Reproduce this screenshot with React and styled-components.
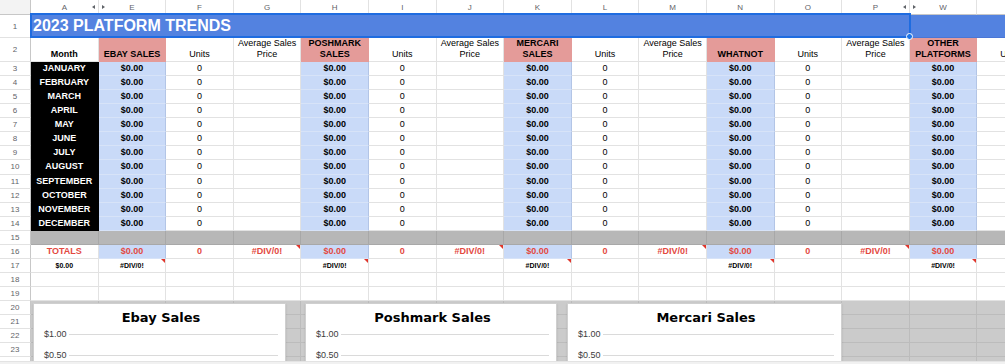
import React from "react";
import styled, { createGlobalStyle } from "styled-components";

const GlobalStyle = createGlobalStyle`
  html, body { margin: 0; padding: 0; background: #fff; }
  body {
    width: 1005px;
    height: 364px;
    overflow: hidden;
    font-family: "Liberation Sans", Arial, sans-serif;
  }
`;

const BLUE_TITLE = "#5382e0";
const LIGHT_BLUE = "#c9daf8";
const PINK = "#e49b99";
const RED = "#e3493f";
const GRID = "#e2e2e2";
const HEAD_GRID = "#c7c7c7";

const COLS = [
  { letter: "A", kind: "month", mark: "right" },
  { letter: "E", kind: "sales", head: "EBAY SALES", mark: "left" },
  { letter: "F", kind: "units" },
  { letter: "G", kind: "avg" },
  { letter: "H", kind: "sales", head: "POSHMARK\nSALES" },
  { letter: "I", kind: "units" },
  { letter: "J", kind: "avg" },
  { letter: "K", kind: "sales", head: "MERCARI\nSALES" },
  { letter: "L", kind: "units" },
  { letter: "M", kind: "avg" },
  { letter: "N", kind: "sales", head: "WHATNOT" },
  { letter: "O", kind: "units" },
  { letter: "P", kind: "avg", mark: "right" },
  { letter: "W", kind: "sales", head: "OTHER\nPLATFORMS", mark: "left" },
  { letter: "X", kind: "units" },
];

const MONTHS = [
  "JANUARY", "FEBRUARY", "MARCH", "APRIL", "MAY", "JUNE",
  "JULY", "AUGUST", "SEPTEMBER", "OCTOBER", "NOVEMBER", "DECEMBER",
];

const CHARTS = [
  { title: "Ebay Sales", left: 33, width: 253 },
  { title: "Poshmark Sales", left: 305, width: 252 },
  { title: "Mercari Sales", left: 567, width: 275 },
];

const Page = styled.div`
  width: 1005px;
  height: 364px;
  display: flex;
  flex-direction: column;
  overflow: hidden;
`;

const Viewport = styled.div`
  position: relative;
  height: 362px;
  overflow: hidden;
`;

const ScrollStrip = styled.div`
  height: 2px;
  background: #f1f1f1;
  border-top: 1px solid #e3e3e3;
`;

const Grid = styled.div`
  display: grid;
  grid-template-columns: 31px repeat(15, 67.6px);
  grid-template-rows: 15px 23px 24px repeat(22, 14.07px);
`;

const Corner = styled.div`
  box-sizing: border-box;
  background: #f3f3f3;
  border-right: 1px solid ${HEAD_GRID};
  border-bottom: 1px solid ${HEAD_GRID};
`;

const ColHead = styled.div`
  position: relative;
  box-sizing: border-box;
  display: flex;
  align-items: center;
  justify-content: center;
  background: #fff;
  color: #5f6368;
  font-size: 8px;
  border-right: 1px solid ${GRID};
  border-bottom: 1px solid ${HEAD_GRID};
`;

const HiddenMark = styled.span`
  position: absolute;
  top: 5px;
  ${(p) => (p.$side === "right" ? "right: 3px;" : "left: 3px;")}
  width: 0;
  height: 0;
  border-top: 2.5px solid transparent;
  border-bottom: 2.5px solid transparent;
  ${(p) =>
    p.$side === "right"
      ? "border-right: 3px solid #5f6368;"
      : "border-left: 3px solid #5f6368;"}
`;

const RowHead = styled.div`
  box-sizing: border-box;
  display: flex;
  align-items: center;
  justify-content: center;
  background: #fff;
  color: #5f6368;
  font-size: 8px;
  border-right: 1px solid ${HEAD_GRID};
  border-bottom: 1px solid ${GRID};
`;

const TitleCell = styled.div`
  grid-column: 2 / -1;
  box-sizing: border-box;
  display: flex;
  align-items: center;
  padding-left: 2px;
  background: ${BLUE_TITLE};
  color: #fff;
  font-size: 16px;
  font-weight: 700;
  border-bottom: 1px solid #4a76d6;
  white-space: nowrap;
`;

const Cell = styled.div`
  position: relative;
  box-sizing: border-box;
  display: flex;
  align-items: ${(p) => (p.$bottom ? "flex-end" : "center")};
  justify-content: center;
  padding-bottom: ${(p) => (p.$bottom ? "1px" : "0")};
  text-align: center;
  white-space: pre-line;
  overflow: hidden;
  background: ${(p) => p.$bg || "#fff"};
  color: ${(p) => p.$color || "#000"};
  font-size: ${(p) => p.$size || 9}px;
  font-weight: ${(p) => (p.$bold ? 700 : 400)};
  line-height: 11px;
  border-right: 1px solid ${(p) => p.$lineR || p.$line || GRID};
  border-bottom: 1px solid ${(p) => p.$line || GRID};
`;

const ErrorMark = styled.span`
  position: absolute;
  top: 0;
  right: 0;
  width: 0;
  height: 0;
  border-top: 4px solid #e0352b;
  border-left: 4px solid transparent;
`;

const Selection = styled.div`
  position: absolute;
  left: 30px;
  top: 13px;
  width: 881px;
  height: 25px;
  box-sizing: border-box;
  border: 2px solid #1f6ce0;
  pointer-events: none;
`;

const Handle = styled.div`
  position: absolute;
  left: 906px;
  top: 33px;
  width: 7px;
  height: 7px;
  box-sizing: border-box;
  border-radius: 50%;
  background: #1a73e8;
  border: 1px solid #fff;
`;

const ChartCard = styled.div`
  position: absolute;
  top: 303px;
  left: ${(p) => p.$left}px;
  width: ${(p) => p.$width}px;
  height: 120px;
  box-sizing: border-box;
  background: #fff;
  border: 1px solid #cfcfcf;
  box-shadow: 0 1px 2px rgba(0, 0, 0, 0.12);
  display: flex;
  flex-direction: column;
  padding: 6px 7px 0 10px;
`;

const ChartTitle = styled.div`
  font-family: "DejaVu Sans", Verdana, sans-serif;
  font-weight: 700;
  font-size: 13px;
  line-height: 16px;
  text-align: center;
  color: #000;
`;

const AxisRows = styled.div`
  display: flex;
  flex-direction: column;
  gap: 5px;
`;

const AxisRow = styled.div`
  display: flex;
  align-items: center;
  gap: 2px;
  height: 16px;
`;

const AxisLabel = styled.span`
  font-size: 9px;
  color: #3c3c3c;
  white-space: nowrap;
  min-width: 22px;
`;

const GridLine = styled.div`
  flex: 1;
  height: 1px;
  background: #dadada;
`;

function cellFor(row, col, mIdx) {
  const { kind } = col;
  if (row === 2) {
    if (kind === "month") return { text: "Month", bold: true, bottom: true };
    if (kind === "sales")
      return { text: col.head, bold: true, bottom: true, bg: PINK, line: PINK };
    if (kind === "units") return { text: "Units", bottom: true };
    return { text: "Average Sales\nPrice", bottom: true };
  }
  if (row >= 3 && row <= 14) {
    if (kind === "month")
      return { text: MONTHS[mIdx], bold: true, bg: "#000", color: "#fff", line: "#000" };
    if (kind === "sales")
      return { text: "$0.00", bold: true, bg: LIGHT_BLUE, line: "#d7e3f8", lineR: "#b3c5e6" };
    if (kind === "units") return { text: "0" };
    return { text: "" };
  }
  if (row === 15) return { text: "", bg: "#b7b7b7", line: "#a8a8a8" };
  if (row === 16) {
    if (kind === "month") return { text: "TOTALS", bold: true, color: RED };
    if (kind === "sales")
      return { text: "$0.00", bold: true, color: RED, bg: LIGHT_BLUE, line: "#d7e3f8", lineR: "#b3c5e6" };
    if (kind === "units") return { text: "0", bold: true, color: RED };
    return { text: "#DIV/0!", bold: true, color: RED, err: true };
  }
  if (row === 17) {
    if (kind === "month") return { text: "$0.00", bold: true, size: 7 };
    if (kind === "sales") return { text: "#DIV/0!", bold: true, size: 7, err: true };
    return { text: "" };
  }
  if (row >= 20) return { text: "", bg: "#cbcbcb", line: "#bcbcbc" };
  return { text: "" };
}

function SheetRow({ row }) {
  return (
    <>
      <RowHead>{row}</RowHead>
      {COLS.map((col) => {
        const c = cellFor(row, col, row - 3);
        return (
          <Cell
            key={col.letter}
            $bg={c.bg}
            $color={c.color}
            $bold={c.bold}
            $size={c.size}
            $bottom={c.bottom}
            $line={c.line}
            $lineR={c.lineR}
          >
            {c.text}
            {c.err && <ErrorMark />}
          </Cell>
        );
      })}
    </>
  );
}

function Chart({ title, left, width }) {
  return (
    <ChartCard $left={left} $width={width}>
      <ChartTitle>{title}</ChartTitle>
      <AxisRows>
        {["$1.00", "$0.50", "$0.00"].map((v) => (
          <AxisRow key={v}>
            <AxisLabel>{v}</AxisLabel>
            <GridLine />
          </AxisRow>
        ))}
      </AxisRows>
    </ChartCard>
  );
}

const ROWS = Array.from({ length: 23 }, (_, i) => i + 2);

export default function App() {
  return (
    <>
      <GlobalStyle />
      <Page>
        <Viewport>
          <Grid>
            <Corner />
            {COLS.map((col) => (
              <ColHead key={col.letter}>
                {col.letter}
                {col.mark && <HiddenMark $side={col.mark} />}
              </ColHead>
            ))}
            <RowHead>1</RowHead>
            <TitleCell>2023 PLATFORM TRENDS</TitleCell>
            {ROWS.map((r) => (
              <SheetRow key={r} row={r} />
            ))}
          </Grid>
          <Selection />
          <Handle />
          {CHARTS.map((c) => (
            <Chart key={c.title} {...c} />
          ))}
        </Viewport>
        <ScrollStrip />
      </Page>
    </>
  );
}
